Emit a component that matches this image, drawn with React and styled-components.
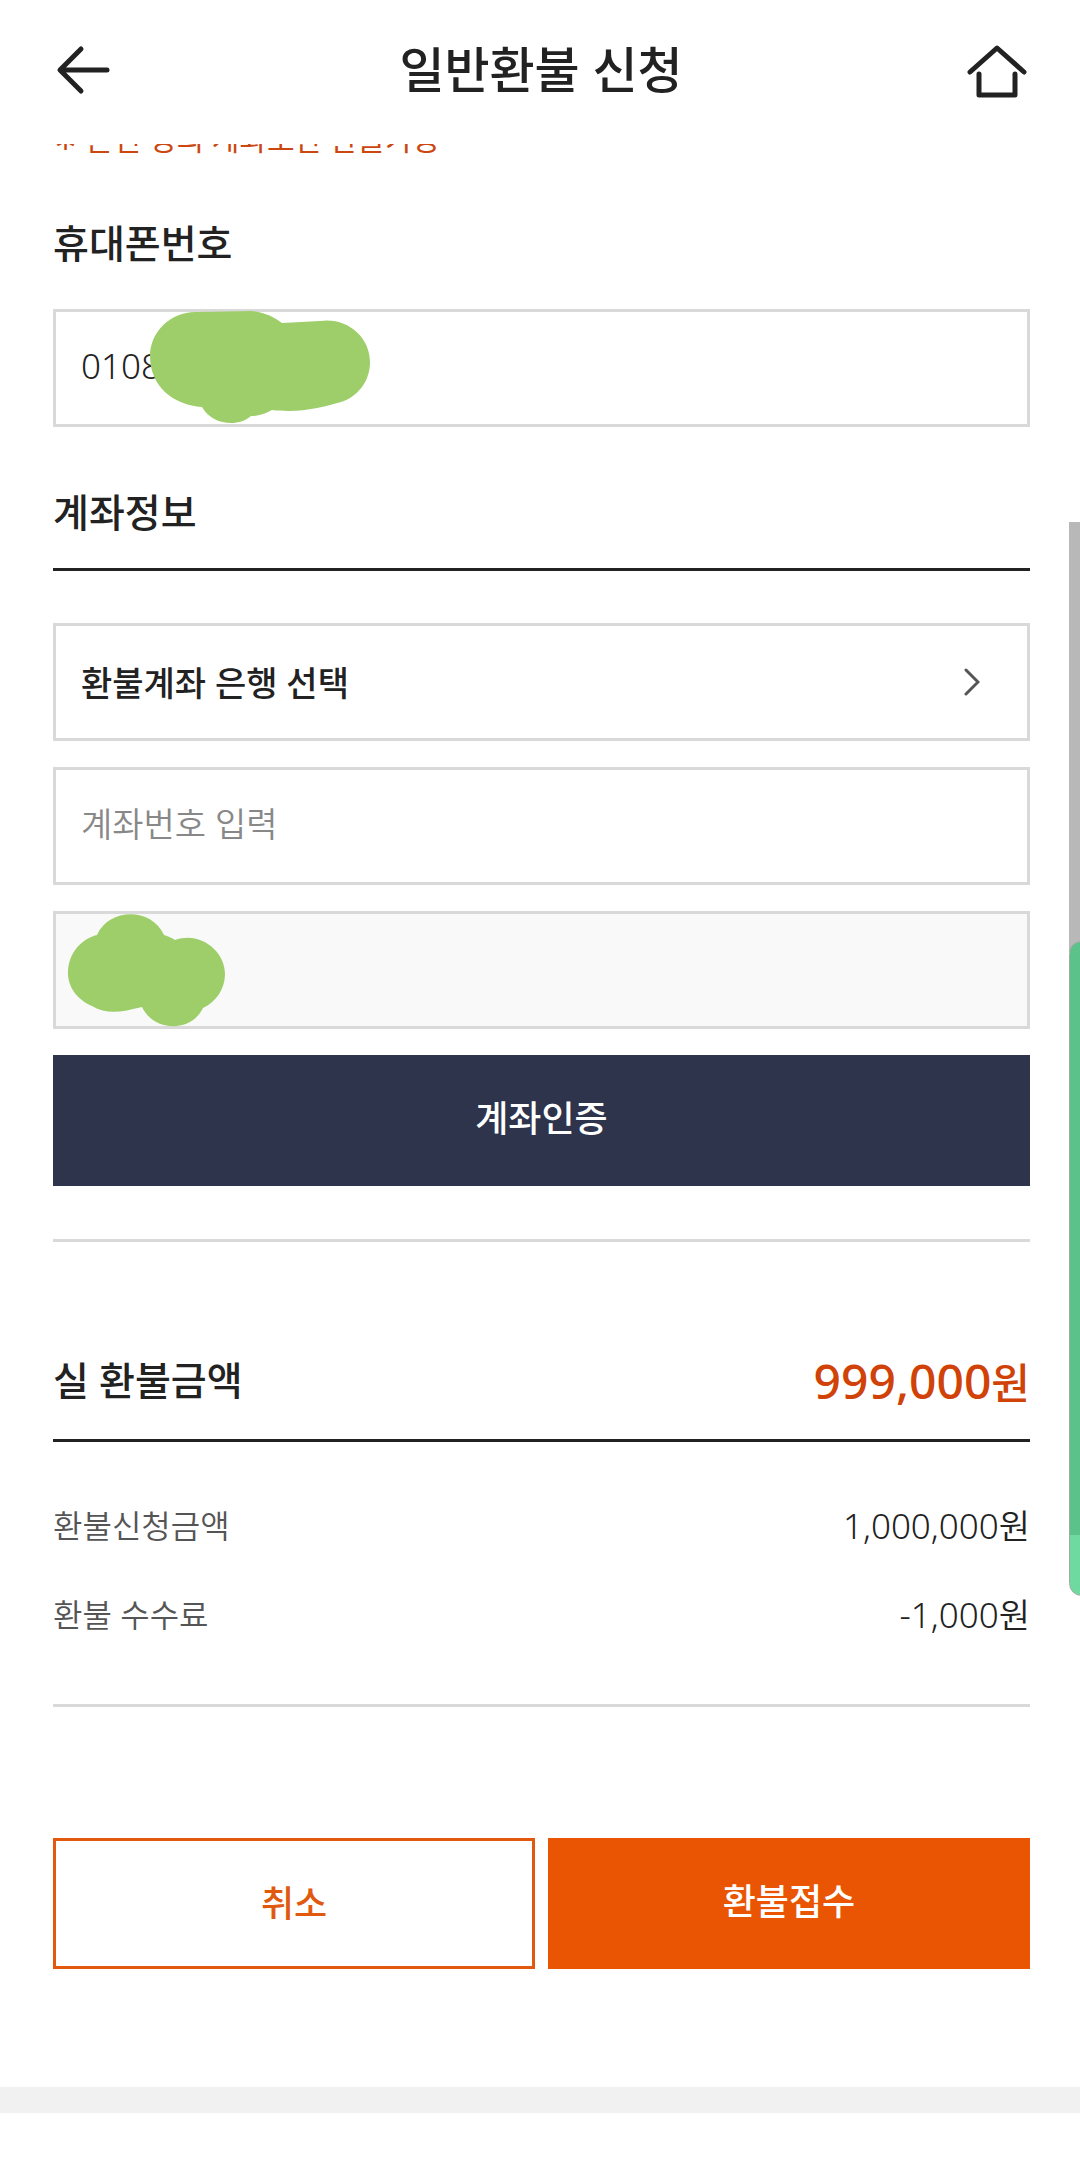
import React, { useState } from 'react'
import styled, { createGlobalStyle } from 'styled-components'

const GlobalStyle = createGlobalStyle`
  * {
    box-sizing: border-box;
  }
  body {
    margin: 0;
    background-color: #fff;
    color: #222;
    font-family: 'Noto Sans', 'Noto Sans CJK KR', sans-serif;
  }
  button, input, select {
    font-family: inherit;
    color: inherit;
    border-radius: 0;
    margin: 0;
  }
`
const Page = styled.div`
  position: relative;
  overflow: hidden;
`
const Header = styled.header`
  position: relative;
  z-index: 2;
  display: flex;
  align-items: center;
  justify-content: space-between;
  height: 144px;
  padding: 0 52px 6px 50px;
  background-color: #fff;
`
const Title = styled.h1`
  margin: 0;
  font-size: 49px;
  line-height: 72px;
  font-weight: 500;
`
const IconButton = styled.button`
  display: flex;
  padding: 0;
  border: 0;
  background: none;
`
const Content = styled.main`
  padding: 0 50px 118px 53px;
`
const Notice = styled.p`
  margin: -27px 0 0;
  color: #cc470f;
  font-size: 30px;
  line-height: 44px;
`
const Label = styled.label`
  display: block;
  margin-top: 54px;
  font-size: 39px;
  line-height: 56px;
  font-weight: 500;
`
const SectionHead = styled.div`
  display: flex;
  align-items: center;
  justify-content: space-between;
  height: ${({ $tall }) => ($tall ? '90px' : '84px')};
  margin-top: ${({ $tall }) => ($tall ? '110px' : '60px')};
  padding-bottom: 32px;
  border-bottom: 3px solid #222;
`
const SectionTitle = styled.h2`
  margin: 0;
  font-size: 39px;
  line-height: 56px;
  font-weight: 500;
`
const Fields = styled.div`
  display: flex;
  flex-direction: column;
  gap: 26px;
  margin-top: ${({ $top }) => $top}px;
`
const Field = styled.div`
  position: relative;
  display: flex;
  align-items: center;
`
const fieldBox = `
  width: 100%;
  height: 118px;
  border: 3px solid #d9d9d9;
  background-color: #fff;
  outline: none;
`
const Input = styled.input`
  ${fieldBox}
  padding: 0 25px 6px;
  font-size: 35px;
  font-weight: 350;

  &::placeholder {
    color: #888;
    opacity: 1;
    font-size: 34px;
  }
  &:disabled {
    background-color: #f9f9f9;
  }
`
const Select = styled.select`
  ${fieldBox}
  appearance: none;
  padding: 2px 80px 0 25px;
  font-size: 34px;
  font-weight: 500;
`
const Chevron = styled.svg`
  position: absolute;
  right: 50px;
  pointer-events: none;
`
const Scribble = styled.svg`
  position: absolute;
  left: 0;
  top: 0;
  pointer-events: none;
`
const Button = styled.button`
  flex: 1;
  min-height: 131px;
  padding: 0 0 ${({ $outline }) => ($outline ? 0 : 4)}px;
  border: 3px solid ${({ $color }) => $color};
  background-color: ${({ $color, $outline }) => ($outline ? '#fff' : $color)};
  color: ${({ $color, $outline }) => ($outline ? $color : '#fff')};
  font-size: 36px;
  line-height: 52px;
  font-weight: 500;
`
const Divider = styled.hr`
  margin: ${({ $top }) => $top}px 0 0;
  border: 0;
  border-top: 3px solid #d9d9d9;
`
const Total = styled.strong`
  padding-top: 4px;
  color: #d04208;
  font-size: 48px;
  line-height: 60px;
  font-weight: 500;
`
const Won = styled.span`
  font-size: ${({ $size }) => $size}px;
`
const Amounts = styled.dl`
  display: flex;
  flex-direction: column;
  gap: 37px;
  margin: 58px 0 0;
`
const AmountRow = styled.div`
  display: flex;
  align-items: center;
  justify-content: space-between;
  line-height: 52px;
`
const AmountName = styled.dt`
  color: #555;
  font-size: 32px;
  font-weight: 350;
`
const AmountValue = styled.dd`
  margin: 0;
  font-size: 35px;
  font-weight: 350;
`
const Actions = styled.div`
  display: flex;
  gap: 13px;
  margin-top: 131px;
`
const Band = styled.div`
  height: 26px;
  background-color: #f1f1f1;
`
const Scrollbar = styled.div`
  position: absolute;
  top: 522px;
  right: 0;
  width: 11px;
  height: 430px;
  background-color: #b8b8b8;
`
const EdgeHandle = styled.div`
  position: absolute;
  z-index: 1;
  top: 941px;
  right: -14px;
  width: 25px;
  height: 655px;
  border: 1px solid #a3aaa6;
  border-radius: 14px;
  background: linear-gradient(#5bc389 593px, #6fdaa0 593px);
`

const rows = [
  { name: '환불신청금액', value: '1,000,000' },
  { name: '환불 수수료', value: '-1,000' },
]

export default function App() {
  const [phone, setPhone] = useState('0108')
  const [account, setAccount] = useState('')

  return (
    <Page>
      <GlobalStyle />
      <Header>
        <IconButton aria-label="뒤로">
          <svg width="68" height="60" viewBox="0 0 68 60" fill="none" stroke="#222" strokeWidth="5" strokeLinecap="round" strokeLinejoin="round">
            <path d="M31 10 10 31l21 21M11 31h46" />
          </svg>
        </IconButton>
        <Title>일반환불 신청</Title>
        <IconButton aria-label="홈">
          <svg width="64" height="60" viewBox="0 0 64 60" fill="none" stroke="#222" strokeWidth="5" strokeLinecap="round" strokeLinejoin="round">
            <path d="M6 33 33 9l27 24M15 35v21h36V35" />
          </svg>
        </IconButton>
      </Header>

      <Content>
        <Notice>∗ 본인 명의 계좌로만 환불가능</Notice>

        <Label htmlFor="phone">휴대폰번호</Label>
        <Fields $top={38}>
          <Field>
            <Input id="phone" value={phone} onChange={(e) => setPhone(e.target.value)} />
            <Scribble width="330" height="118" viewBox="0 0 330 118" fill="#9dce69">
              <path d="M144 3 L198 2 C211 3 221 8 229 14 C243 13 254 13 267 12 C293 8 317 27 317 53 C317 73 304 88 288 93 C266 99 248 104 219 101 C212 105 205 107 198 107 C186 118 160 117 149 98 C121 96 97 78 97 47 C97 22 119 2 144 3Z" />
            </Scribble>
          </Field>
        </Fields>

        <SectionHead>
          <SectionTitle>계좌정보</SectionTitle>
        </SectionHead>

        <Fields $top={52}>
          <Field>
            <Select aria-label="환불계좌 은행 선택" defaultValue="">
              <option value="">환불계좌 은행 선택</option>
            </Select>
            <Chevron width="16" height="28" viewBox="0 0 16 28" fill="none" stroke="#555" strokeWidth="3" strokeLinecap="round">
              <path d="M2 2l12 12L2 26" />
            </Chevron>
          </Field>
          <Field>
            <Input
              aria-label="계좌번호"
              placeholder="계좌번호 입력"
              value={account}
              onChange={(e) => setAccount(e.target.value)}
            />
          </Field>
          <Field>
            <Input aria-label="예금주" disabled />
            <Scribble width="180" height="118" viewBox="0 0 180 118" fill="#9dce69">
              <path d="M44 24 C56 -3 98 -4 111 24 C115 25 119 27 122 29 C147 20 172 40 172 63 C172 78 163 91 150 97 C138 122 101 121 89 96 C69 101 54 104 39 95 C24 89 14 75 15 60 C16 42 28 28 44 24Z" />
            </Scribble>
          </Field>
          <Button $color="#2d344c">계좌인증</Button>
        </Fields>

        <Divider $top={53} />

        <SectionHead $tall>
          <SectionTitle>실 환불금액</SectionTitle>
          <Total>999,000<Won $size={42}>원</Won></Total>
        </SectionHead>

        <Amounts>
          {rows.map((row) => (
            <AmountRow key={row.name}>
              <AmountName>{row.name}</AmountName>
              <AmountValue>{row.value}<Won $size={34}>원</Won></AmountValue>
            </AmountRow>
          ))}
        </Amounts>

        <Divider $top={63} />

        <Actions>
          <Button $color="#e0590f" $outline>취소</Button>
          <Button $color="#ea5504">환불접수</Button>
        </Actions>
      </Content>

      <Band />
      <Scrollbar />
      <EdgeHandle />
    </Page>
  )
}
